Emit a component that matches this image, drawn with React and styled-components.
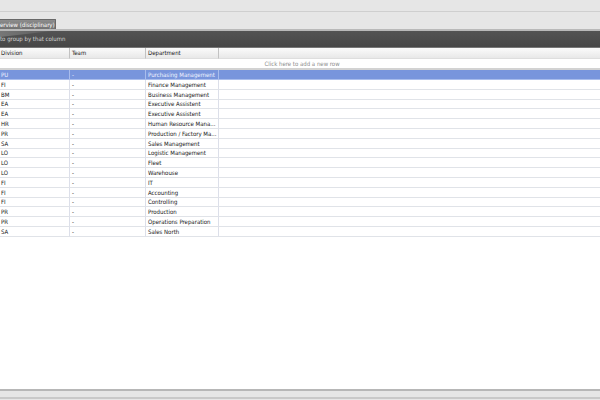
import React, { useState } from "react";
import styled, { createGlobalStyle } from "styled-components";

const GlobalStyle = createGlobalStyle`
  body {
    margin: 0;
    background: #e6e6e6;
    font-family: "DejaVu Sans Condensed", "DejaVu Sans", sans-serif;
    font-size: 6px;
    line-height: 8px;
    color: #161616;
  }
`;

const Page = styled.div`
  display: flex;
  flex-direction: column;
  height: 100vh;
  overflow: hidden;
`;

const TopBar = styled.header`
  flex: 0 0 11px;
  border-bottom: 1px solid #cfcfcf;
`;

const TabBar = styled.nav`
  display: flex;
  align-items: flex-end;
  flex: 0 0 17px;
  border-bottom: 2px solid #b9b9b9;
`;

const Tab = styled.button`
  height: 10px;
  padding: 0;
  border: 1px solid #696969;
  border-width: 1px 1px 0 0;
  border-radius: 0 1px 0 0;
  background: linear-gradient(#8c8c8c, #727272);
  color: #fff;
  font: inherit;
  white-space: nowrap;
`;

const GroupPanel = styled.div`
  display: flex;
  align-items: center;
  flex: 0 0 16px;
  position: relative;
  border-bottom: 1px solid #777;
  background: linear-gradient(#535353, #474747);
  color: #d2d2d2;

  &::before {
    content: "";
    position: absolute;
    top: 0;
    left: 0;
    width: 52px;
    height: 6px;
    background: linear-gradient(90deg, #777, #5c5c5c);
    clip-path: polygon(0 0, 100% 0, 0 100%);
  }
`;

const GroupHint = styled.span`
  position: relative;
`;

const GridArea = styled.main`
  flex: 1;
  min-height: 0;
  overflow: hidden;
  background: #fff;
  border-bottom: 2px solid #b7b7b7;
`;

const Table = styled.table`
  width: 100%;
  table-layout: fixed;
  border-spacing: 0;
`;

const Column = styled.col`
  width: ${({ $width }) => $width || "auto"};
`;

const HeadCell = styled.th`
  height: 10px;
  padding: 0 0 0 2px;
  border-right: 1px solid #c2c2c2;
  border-bottom: 1px solid #dedede;
  background: linear-gradient(#fbfbfb, #e8e8e8);
  font-weight: normal;
  text-align: left;

  &:first-child {
    padding-left: 1px;
  }

  &:last-child {
    border-right: none;
  }
`;

const NewRowCell = styled.td`
  height: 9px;
  padding: 0;
  border-bottom: 2px solid #d2d2d2;
  text-align: center;
`;

const NewRowButton = styled.button`
  display: block;
  margin: 0 auto;
  padding: 0 0 0 4px;
  border: none;
  background: none;
  color: #8c8c8c;
  font: inherit;
`;

const Cell = styled.td`
  height: 9px;
  padding: 0 0 0 2px;
  border-right: 1px solid #dcdfe9;
  border-bottom: 1px solid #e0e3e8;
  line-height: 8px;
  white-space: nowrap;

  &:first-child {
    padding-left: 1px;
  }

  &:last-child {
    border-right: none;
  }
`;

const Row = styled.tr`
  cursor: default;

  &:nth-child(5n + 4) ${Cell} {
    height: 8px;
  }

  & ${Cell} {
    background: ${({ $selected }) => ($selected ? "#7895dc" : "#fff")};
    color: ${({ $selected }) => ($selected ? "#f0f4ff" : "inherit")};
    ${({ $selected }) => $selected && "border-color: #a9bdec;"}
  }
`;

const StatusBar = styled.footer`
  flex: 0 0 6px;
  border-bottom: 2px solid #c9c9c9;
  margin-bottom: 1px;
`;

const rows = [
  ["PU", "-", "Purchasing Management"],
  ["FI", "-", "Finance Management"],
  ["BM", "-", "Business Management"],
  ["EA", "-", "Executive Assistent"],
  ["EA", "-", "Executive Assistent"],
  ["HR", "-", "Human Resource Mana..."],
  ["PR", "-", "Production / Factory Ma..."],
  ["SA", "-", "Sales Management"],
  ["LO", "-", "Logistic Management"],
  ["LO", "-", "Fleet"],
  ["LO", "-", "Warehouse"],
  ["FI", "-", "IT"],
  ["FI", "-", "Accounting"],
  ["FI", "-", "Controlling"],
  ["PR", "-", "Production"],
  ["PR", "-", "Operations Preparation"],
  ["SA", "-", "Sales North"],
];

const App = () => {
  const [selected, setSelected] = useState(0);

  return (
    <Page>
      <GlobalStyle />
      <TopBar />
      <TabBar>
        <Tab type="button">erview (disciplinary)</Tab>
      </TabBar>
      <GroupPanel>
        <GroupHint>to group by that column</GroupHint>
      </GroupPanel>
      <GridArea>
        <Table>
          <colgroup>
            <Column $width="70px" />
            <Column $width="76px" />
            <Column $width="73px" />
            <Column />
          </colgroup>
          <thead>
            <tr>
              <HeadCell scope="col">Division</HeadCell>
              <HeadCell scope="col">Team</HeadCell>
              <HeadCell scope="col">Department</HeadCell>
              <HeadCell />
            </tr>
            <tr>
              <NewRowCell colSpan={4}>
                <NewRowButton type="button">
                  Click here to add a new row
                </NewRowButton>
              </NewRowCell>
            </tr>
          </thead>
          <tbody>
            {rows.map(([division, team, department], index) => (
              <Row
                key={index}
                $selected={index === selected}
                onClick={() => setSelected(index)}
              >
                <Cell>{division}</Cell>
                <Cell>{team}</Cell>
                <Cell>{department}</Cell>
                <Cell />
              </Row>
            ))}
          </tbody>
        </Table>
      </GridArea>
      <StatusBar />
    </Page>
  );
};

export default App;
